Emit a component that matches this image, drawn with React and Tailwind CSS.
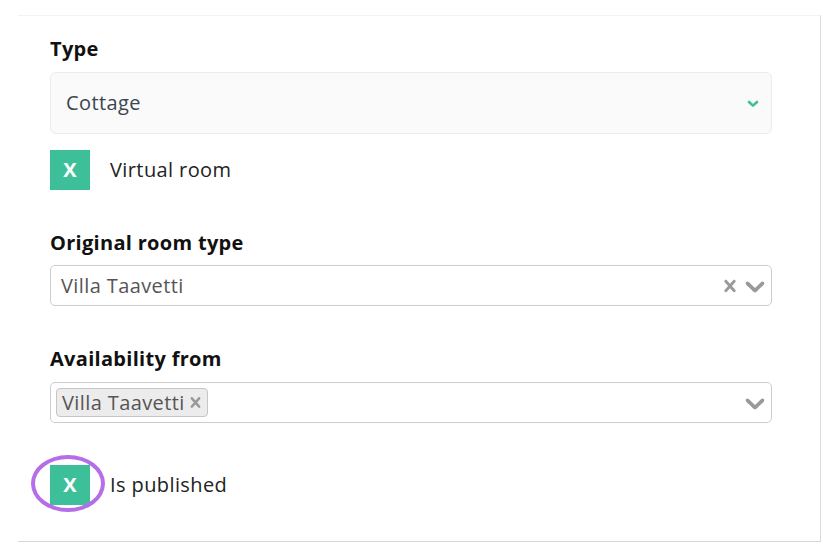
import React from "react";

const font = { fontFamily: '"Open Sans", "DejaVu Sans", sans-serif' };

function Chevron({ className }) {
  return (
    <svg viewBox="0 0 20 20" className={className} fill="currentColor" aria-hidden="true">
      <path d="M4.516 7.548c0.436-0.446 1.043-0.481 1.576 0l3.908 3.747 3.908-3.747c0.533-0.481 1.141-0.446 1.574 0 0.436 0.445 0.408 1.197 0 1.615-0.406 0.418-4.695 4.502-4.695 4.502-0.217 0.223-0.502 0.335-0.787 0.335s-0.57-0.112-0.789-0.335c0 0-4.287-4.084-4.695-4.502s-0.436-1.170 0-1.615z" />
    </svg>
  );
}

function Cross({ className }) {
  return (
    <svg viewBox="0 0 20 20" className={className} fill="currentColor" aria-hidden="true">
      <path d="M14.348 14.849c-0.469 0.469-1.229 0.469-1.697 0l-2.651-3.030-2.651 3.029c-0.469 0.469-1.229 0.469-1.697 0-0.469-0.469-0.469-1.229 0-1.697l2.758-3.15-2.759-3.152c-0.469-0.469-0.469-1.228 0-1.697s1.228-0.469 1.697 0l2.652 3.031 2.651-3.031c0.469-0.469 1.228-0.469 1.697 0s0.469 1.229 0 1.697l-2.758 3.152 2.758 3.15c0.469 0.469 0.469 1.229 0 1.698z" />
    </svg>
  );
}

function Check({ label, circled }) {
  return (
    <div className="flex items-center h-[40px]">
      <div className="relative w-[40px] h-[40px]">
        <div className="w-[40px] h-[40px] bg-[#3dbf9a] flex items-center justify-center text-white font-bold text-[20px] leading-none">
          X
        </div>
        {circled && (
          <div className="absolute left-[-19px] top-[-10px] w-[74px] h-[57px] rounded-[50%] border-[4px] border-[#b56ee8]" />
        )}
      </div>
      <span className="ml-[20px] text-[20px] tracking-[0.4px] text-[#222]">{label}</span>
    </div>
  );
}

function Label({ children, className }) {
  return (
    <div className={`h-[24px] leading-[24px] text-[20px] tracking-[0.3px] font-bold text-[#111] ${className}`}>{children}</div>
  );
}

export default function App() {
  return (
    <div className="w-[823px] h-[550px] bg-white pt-[15px] overflow-hidden" style={font}>
      <div className="ml-[18px] w-[803px] h-[527px] border-t border-t-[#f3f3f3] border-r border-r-[#d9d9d9] border-b border-b-[#d6d6d6] pl-[32px] pr-[48px]">
        <Label className="mt-[21px]">Type</Label>
        <div className="mt-[11px] h-[62px] rounded-[6px] border border-[#ebebeb] bg-[#fafafa] flex items-center pl-[15px] pr-[12px]">
          <span className="flex-1 text-[20px] tracking-[0.4px] text-[#3c4450]">Cottage</span>
          <svg viewBox="0 0 12 8" className="w-[12px] h-[8px] text-[#3dbf9a] mt-[2px]" fill="none" stroke="currentColor" strokeWidth="2.6" strokeLinecap="round" strokeLinejoin="round">
            <path d="M2 2 L6 5.6 L10 2" />
          </svg>
        </div>
        <div className="mt-[16px]">
          <Check label="Virtual room" />
        </div>

        <Label className="mt-[41px]">Original room type</Label>
        <div className="mt-[10px] h-[41px] rounded-[5px] border border-[#cccccc] bg-white flex items-center pl-[10px]">
          <span className="flex-1 text-[20px] tracking-[0.4px] text-[#555]">Villa Taavetti</span>
          <Cross className="w-[24px] h-[24px] text-[#999] -mr-[3px]" />
          <Chevron className="w-[32px] h-[32px] text-[#999]" />
        </div>

        <Label className="mt-[41px]">Availability from</Label>
        <div className="mt-[11px] h-[41px] rounded-[5px] border border-[#cccccc] bg-white flex items-center pl-[5px]">
          <div className="flex-1 flex">
            <div className="h-[29px] rounded-[4px] border border-[#c6c6c6] bg-[#ececec] flex items-center pl-[5px] pr-[1px]">
              <span className="text-[20px] tracking-[0.4px] text-[#555] leading-none">Villa Taavetti</span>
              <Cross className="w-[21px] h-[21px] text-[#999]" />
            </div>
          </div>
          <Chevron className="w-[32px] h-[32px] text-[#999]" />
        </div>

        <div className="mt-[42px]">
          <Check label="Is published" circled />
        </div>
      </div>
    </div>
  );
}
